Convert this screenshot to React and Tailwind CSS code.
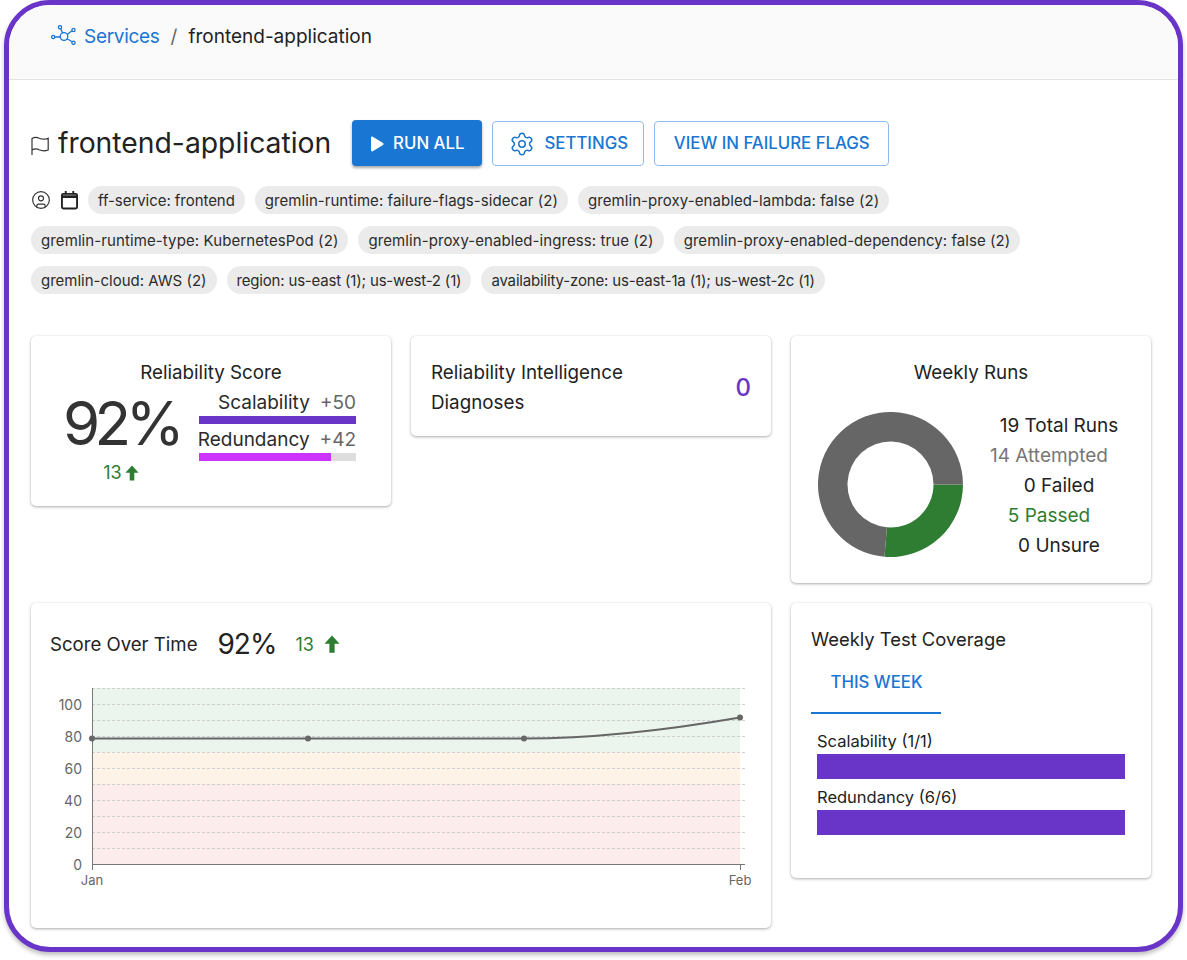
import React from 'react';
import { Settings, CircleUser } from 'lucide-react';

const chipRows = [
  [
    ['ff-service: frontend', 'tracking-[-0.05px]'],
    ['gremlin-runtime: failure-flags-sidecar (2)', 'tracking-[0.05px]'],
    ['gremlin-proxy-enabled-lambda: false (2)', 'tracking-[0.08px]'],
  ],
  [
    ['gremlin-runtime-type: KubernetesPod (2)', 'tracking-[0.1px]'],
    ['gremlin-proxy-enabled-ingress: true (2)', 'tracking-[0.08px]'],
    ['gremlin-proxy-enabled-dependency: false (2)', 'tracking-[0.05px]'],
  ],
  [
    ['gremlin-cloud: AWS (2)', 'tracking-normal'],
    ['region: us-east (1); us-west-2 (1)', 'tracking-[-0.18px]'],
    ['availability-zone: us-east-1a (1); us-west-2c (1)', 'tracking-[-0.16px]'],
  ],
];

const Chip = ({ label, tracking }) => (
  <span className={`h-7 px-[10px] rounded-full bg-[#ebebeb] text-[15px] leading-[30px] text-[#2b2b2b] whitespace-nowrap ${tracking}`}>{label}</span>
);

const ServicesIcon = () => (
  <svg width="25" height="20" viewBox="0 0 25 20" fill="none" stroke="#1976d2" strokeWidth="1.3" className="mt-[3px]">
    <circle cx="2.2" cy="12" r="1.6" />
    <circle cx="9" cy="2.2" r="1.6" />
    <circle cx="22.5" cy="5" r="1.6" />
    <circle cx="22.5" cy="17.8" r="1.6" />
    <circle cx="13" cy="11.5" r="3.8" />
    <path d="M3.8 12H9.2M9.8 3.7L11.6 8M21 5.8L16.2 9.5M21.2 16.8L16 13.8" />
  </svg>
);

const FlagIcon = () => (
  <svg width="18" height="19" viewBox="0 0 18 19" fill="none" stroke="#333" strokeWidth="1.2" className="mt-[5px]">
    <path d="M1 19V2.5C3.4 1 5.8 1 8.2 2.2C10.8 3.4 14 3.6 17.2 2.2V14C14 15.2 10.8 15 8.2 13.8C5.8 12.6 3.4 12.6 1 14" />
  </svg>
);

const CalendarIcon = () => (
  <svg width="17" height="20" viewBox="0 0 18 20" fill="none" stroke="#222">
    <rect x="1" y="3.5" width="16" height="15.5" rx="1.5" strokeWidth="2" />
    <path d="M1 6.5H17" strokeWidth="3" />
    <path d="M5 0.5V4M13 0.5V4" strokeWidth="2" />
  </svg>
);

const UpArrow = ({ size = 14 }) => (
  <svg width={size} height={size * 1.15} viewBox="0 0 14 16" fill="#2e7d32">
    <path d="M7 0.5L13.6 7.6H9.3V15.5H4.7V7.6H0.4Z" />
  </svg>
);

const Card = ({ className, children }) => (
  <div className={`bg-white rounded-[5px] shadow-[0_1px_3px_rgba(0,0,0,0.32),0_0_1px_rgba(0,0,0,0.08)] ${className}`}>{children}</div>
);

const ScoreBar = ({ label, points, barColor, width }) => (
  <div className="w-[157px]">
    <div className="flex justify-end gap-[10px] text-[19px] leading-[26px] text-[#2b2b2b]">
      <span>{label}</span>
      <span className="text-[#666]">{points}</span>
    </div>
    <div className="h-2 bg-[#ddd]">
      <div className="h-2" style={{ width, backgroundColor: barColor }} />
    </div>
  </div>
);

const donut = () => {
  const cx = 72.5, cy = 72.5, R = 72.5, r = 43;
  const a = (5 / 19) * 2 * Math.PI;
  const x1 = cx + R * Math.cos(a), y1 = cy + R * Math.sin(a);
  const x2 = cx + r * Math.cos(a), y2 = cy + r * Math.sin(a);
  return {
    green: `M${cx + R} ${cy}A${R} ${R} 0 0 1 ${x1} ${y1}L${x2} ${y2}A${r} ${r} 0 0 0 ${cx + r} ${cy}Z`,
    gray: `M${x1} ${y1}A${R} ${R} 0 1 1 ${cx + R} ${cy}L${cx + r} ${cy}A${r} ${r} 0 1 0 ${x2} ${y2}Z`,
  };
};

const ScoreChart = () => {
  const grid = Array.from({ length: 12 }, (_, i) => 6.5 + i * 16);
  const ticks = [[100, 22], [80, 54], [60, 86], [40, 118], [20, 150], [0, 182]];
  return (
    <svg width="740" height="210" className="block" style={{ fontFamily: 'Inter, sans-serif' }}>
      <rect x="61" y="6" width="648" height="64" fill="#ecf5ed" />
      <rect x="61" y="70" width="648" height="32" fill="#fef3e7" />
      <rect x="61" y="102" width="648" height="80" fill="#fdecec" />
      {grid.map((y) => (
        <line key={y} x1="61" x2="714" y1={y} y2={y} stroke="#d0d0d0" strokeDasharray="3 2" />
      ))}
      <path d="M61.5 6V188M61 182.5H714M709.5 182V188" stroke="#777" fill="none" />
      {ticks.map(([v, y]) => (
        <text key={v} x="51" y={y + 6} textAnchor="end" fontSize="14" fill="#666">{v}</text>
      ))}
      <text x="61" y="203" textAnchor="middle" fontSize="13" fill="#666">Jan</text>
      <text x="709" y="203" textAnchor="middle" fontSize="13" fill="#666">Feb</text>
      <path d="M61 56.5H493C565 56.5 637 48 709 35.5" fill="none" stroke="#666" strokeWidth="2" />
      {[[61, 56.5], [277, 56.5], [493, 56.5], [709, 35.5]].map(([x, y]) => (
        <circle key={x} cx={x} cy={y} r="3" fill="#666" />
      ))}
    </svg>
  );
};

export default function App() {
  const d = donut();
  return (
    <div className="w-[1187px] h-[960px] bg-white pl-1 font-['Inter',sans-serif] text-[#222]">
      <div className="w-[1179px] h-[952px] bg-white border-[5px] border-[#6935c9] rounded-[46px] overflow-hidden shadow-[0_3px_4px_rgba(0,0,0,0.25)]">
        <header className="h-[75px] bg-[#fafafa] border-b border-[#e3e3e3] pl-[42px] pt-[17px] flex items-start gap-[8px] text-[19px] leading-[30px]">
          <ServicesIcon />
          <span className="text-[#1976d2] tracking-[-0.3px]">Services</span>
          <span className="text-[#666] mx-[3px]">/</span>
          <span>frontend-application</span>
        </header>

        <main className="pl-[22px] pr-[27px] pt-[40px]">
          <div className="flex items-center h-[46px]">
            <FlagIcon />
            <h1 className="ml-[9px] pt-px text-[28.3px] font-normal">frontend-application</h1>
            <button className="ml-[21px] w-[130px] h-[46px] pt-px rounded bg-[#1976d2] text-white text-[16.8px] font-medium flex items-center justify-center gap-[9px] shadow-[0_2px_3px_rgba(0,0,0,0.35)]">
              <svg width="14" height="16" viewBox="0 0 14 16" fill="white"><path d="M1 1.8C1 .8 2 .3 2.8.8L13 7C13.8 7.5 13.8 8.5 13 9L2.8 15.2C2 15.7 1 15.2 1 14.2Z" /></svg>
              RUN ALL
            </button>
            <button className="ml-[10px] w-[152px] h-[45px] pt-px rounded border border-[#8fbcea] text-[#1976d2] text-[16.8px] font-medium flex items-center justify-center gap-[10px]">
              <Settings size={26} strokeWidth={1.4} />
              SETTINGS
            </button>
            <button className="ml-[10px] w-[235px] h-[45px] pt-px rounded border border-[#8fbcea] text-[#1976d2] text-[16.8px] font-medium">
              VIEW IN FAILURE FLAGS
            </button>
          </div>

          <div className="mt-[20px] flex flex-col gap-3">
            {chipRows.map((row, i) => (
              <div key={i} className="flex items-center gap-[10px]">
                {i === 0 && (
                  <>
                    <CircleUser size={20} strokeWidth={1.4} color="#333" />
                    <CalendarIcon />
                  </>
                )}
                {row.map(([label, tracking]) => <Chip key={label} label={label} tracking={tracking} />)}
              </div>
            ))}
          </div>

          <div className="mt-[42px] grid grid-cols-[360px_360px_360px] gap-5 items-start">
            <Card className="h-[170px] pt-[21px]">
              <div className="text-center text-[18.8px] leading-[30px] pt-px">Reliability Score</div>
              <div className="flex pl-[32px] gap-[20px]">
                <div className="w-[116px] flex flex-col items-center">
                  <div className="text-[60px] leading-[62px] text-[#333] tracking-[-5.5px] pt-[4px]">92%</div>
                  <div className="mt-[7px] flex items-center gap-[3px] text-[18px] leading-6 text-[#2e7d32]">13 <UpArrow /></div>
                </div>
                <div className="flex flex-col gap-[3px] pt-[2px]">
                  <ScoreBar label="Scalability" points="+50" barColor="#6935c9" width="100%" />
                  <ScoreBar label="Redundancy" points="+42" barColor="#cc33ff" width="84%" />
                </div>
              </div>
            </Card>

            <Card className="h-[100px] px-5 pt-[4px] flex items-center justify-between">
              <div className="text-[18.8px] leading-[30px] w-[220px]">Reliability Intelligence Diagnoses</div>
              <span className="text-[24px] font-medium text-[#6935c9]">0</span>
            </Card>

            <Card className="h-[247px] pt-[21px]">
              <div className="text-center text-[18.8px] leading-[30px] pt-px">Weekly Runs</div>
              <div className="flex pl-[27px] pt-[9px]">
                <svg width="145" height="145" viewBox="0 0 145 145" className="mt-[15px] shrink-0">
                  <path d={d.green} fill="#2e7d32" />
                  <path d={d.gray} fill="#666" />
                </svg>
                <div className="w-[160px] ml-[16px] mt-[14px] flex flex-col items-center text-[19px] leading-[30px]">
                  <span>19 Total Runs</span>
                  <span className="text-[#777] mr-[20px]">14 Attempted</span>
                  <span>0 Failed</span>
                  <span className="text-[#2e7d32] mr-[20px]">5 Passed</span>
                  <span>0 Unsure</span>
                </div>
              </div>
            </Card>

            <Card className="col-span-2 h-[325px] pt-[24px]">
              <div className="flex items-center pl-[19px] h-[34px]">
                <span className="text-[18.6px] pt-px">Score Over Time</span>
                <span className="ml-5 text-[28px] tracking-[-1px]">92%</span>
                <span className="ml-[19px] text-[18px] text-[#2e7d32]">13</span>
                <span className="ml-[10px]"><UpArrow size={16} /></span>
              </div>
              <div className="mt-[21px]">
                <ScoreChart />
              </div>
            </Card>

            <Card className="h-[275px] pt-[21px] px-5">
              <div className="text-[18.4px] leading-[30px]">Weekly Test Coverage</div>
              <div className="mt-[3px] w-[130px] h-[57px] border-b-2 border-[#1976d2] pl-[19.5px] pt-[13px] text-[16.8px] font-medium text-[#1976d2]">THIS WEEK</div>
              <div className="px-[6px] pt-[15px] text-[16.5px] leading-[24px]">
                <div>Scalability (1/1)</div>
                <div className="h-[25px] bg-[#6935c9] w-[308px] mt-px" />
                <div className="mt-[6px]">Redundancy (6/6)</div>
                <div className="h-[25px] bg-[#6935c9] w-[308px] mt-px" />
              </div>
            </Card>
          </div>
        </main>
      </div>
    </div>
  );
}
